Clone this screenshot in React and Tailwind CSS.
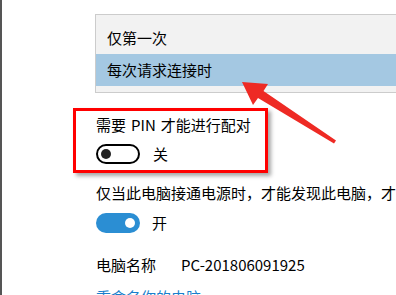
import React from "react";

function Toggle({ on }) {
  return on ? (
    <div className="w-[44px] h-[20px] rounded-full bg-[#2b8ed3] flex items-center justify-end pr-[5px]">
      <div className="w-[10px] h-[10px] rounded-full bg-white" />
    </div>
  ) : (
    <div className="w-[44px] h-[20px] rounded-full border-2 border-black flex items-center pl-[3px]">
      <div className="w-[10px] h-[10px] rounded-full bg-[#222]" />
    </div>
  );
}

function App() {
  return (
    <div
      className="relative w-[396px] h-[295px] overflow-hidden bg-white border-l-2 border-[#555] text-[15px] leading-[20px] text-black"
      style={{ fontFamily: '"Noto Sans CJK SC", "Noto Sans", sans-serif' }}
    >
      <div className="pl-[93px] pt-[14px] w-[600px]">
        {/* dropdown list */}
        <div className="border border-[#cccccc] bg-[#f2f2f2] pt-[7px] pb-[6px]">
          <div className="h-[32px] flex items-center pl-[11px]">仅第一次</div>
          <div className="h-[32px] flex items-center pl-[11px] bg-[#a4c8e2]">每次请求连接时</div>
        </div>

        <div className="pl-[1px]">
          <div className="mt-[22px]">
            需要<span className="px-[5px]">PIN</span>才能进行配对
          </div>
          <div className="mt-[9px] flex items-center gap-[13px]">
            <Toggle on={false} />
            <span>关</span>
          </div>

          <div className="mt-[19px] whitespace-nowrap">仅当此电脑接通电源时，才能发现此电脑，才能与此电脑配对</div>
          <div className="mt-[10px] flex items-center gap-[12px]">
            <Toggle on={true} />
            <span>开</span>
          </div>

          <div className="mt-[22px] flex">
            <span className="w-[85px]">电脑名称</span>
            <span>PC-201806091925</span>
          </div>
          <div className="mt-[12px] text-[#1a7fcc]">重命名你的电脑</div>
        </div>
      </div>

      {/* red annotation box */}
      <div className="absolute left-[71px] top-[108px] w-[195px] h-[65px] border-[3px] border-[#ff0000] shadow-[3px_3px_4px_rgba(0,0,0,0.35)]" />

      {/* red arrow */}
      <svg className="absolute left-0 top-0" width="396" height="295" viewBox="0 0 396 295">
        <polygon
          points="240,82 266,84 261.5,91 334,140.5 332,143.5 256,98 251,105"
          fill="#ee2a24"
        />
      </svg>
    </div>
  );
}

export default App;
